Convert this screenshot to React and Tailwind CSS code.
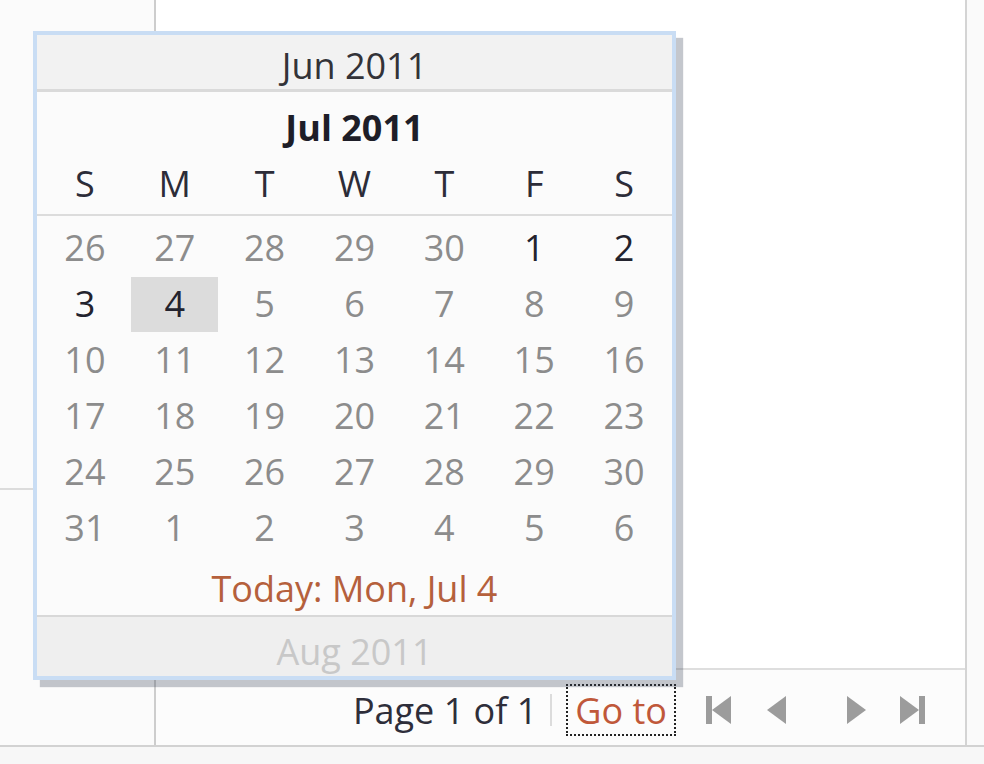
import React from 'react';

const dayNames = ['S', 'M', 'T', 'W', 'T', 'F', 'S'];

// six weeks shown for July 2011; only Jul 1-4 are selectable (max date is today)
const weeks = [
    [26, 27, 28, 29, 30, 1, 2],
    [3, 4, 5, 6, 7, 8, 9],
    [10, 11, 12, 13, 14, 15, 16],
    [17, 18, 19, 20, 21, 22, 23],
    [24, 25, 26, 27, 28, 29, 30],
    [31, 1, 2, 3, 4, 5, 6],
];

const isActive = (w, d) => (w === 0 && d >= 5) || (w === 1 && d <= 1);

const FirstIcon = () => (
    <svg width="26" height="28" viewBox="0 0 26 28">
        <rect x="0" y="0" width="6" height="28" fill="#9c9c9c" />
        <polygon points="25,0 25,28 6,14" fill="#9c9c9c" />
    </svg>
);

const PrevIcon = () => (
    <svg width="20" height="28" viewBox="0 0 20 28">
        <polygon points="19,0 19,28 0,14" fill="#9c9c9c" />
    </svg>
);

const NextIcon = () => (
    <svg width="20" height="28" viewBox="0 0 20 28">
        <polygon points="1,0 1,28 20,14" fill="#9c9c9c" />
    </svg>
);

const LastIcon = () => (
    <svg width="26" height="28" viewBox="0 0 26 28">
        <polygon points="1,0 1,28 20,14" fill="#9c9c9c" />
        <rect x="20" y="0" width="6" height="28" fill="#9c9c9c" />
    </svg>
);

const Calendar = () => (
    <div className="absolute left-[33px] top-[31px] w-[643px] h-[649px] flex flex-col border-4 border-[#c9ddf4] bg-[#fbfbfb] shadow-[7px_7px_1px_rgba(60,70,90,0.3)]">
        <div className="h-[57px] flex items-center justify-center pt-[8px] bg-[#f2f2f2] border-b-[3px] border-[#dadada] text-[#333338]">
            Jun 2011
        </div>
        <div className="h-[68px] flex items-center justify-center pt-[3px] font-bold text-[#1e1e28]">
            Jul 2011
        </div>
        <div className="h-[56px] grid grid-cols-7 px-[3px] pb-[6px] border-b-2 border-[#dcdcdc] text-[#2c2c38]">
            {dayNames.map((n, i) => (
                <div key={i} className="flex items-center justify-center">{n}</div>
            ))}
        </div>
        <div className="grid grid-cols-7 px-[3px] pt-[4px]">
            {weeks.map((week, w) =>
                week.map((d, i) => (
                    <div key={`${w}-${i}`} className="h-[56px] flex items-center justify-center">
                        <div
                            className={
                                'w-[87px] h-[55px] flex items-center justify-center ' +
                                (w === 1 && i === 1 ? 'bg-[#dcdcdc] ' : '') +
                                (isActive(w, i) ? 'text-[#23232e]' : 'text-[#8c8c8c]')
                            }
                        >
                            {d}
                        </div>
                    </div>
                ))
            )}
        </div>
        <div className="h-[61px] flex items-center justify-center pt-[6px] border-b-2 border-[#d8d8d8] text-[#b5603c]">
            Today: Mon, Jul 4
        </div>
        <div className="flex-1 flex items-center justify-center pt-[11px] bg-[#efefef] text-[#c8c8c8]">
            Aug 2011
        </div>
    </div>
);

const App = () => {
    return (
        <div className="relative w-[984px] h-[764px] overflow-hidden bg-white flex flex-col text-[36px] leading-none font-['Open_Sans',sans-serif]">
            <div className="h-[745px] flex">
                {/* left column */}
                <div className="w-[156px] flex flex-col bg-[#fbfbfb] border-r-2 border-[#cdcdcd]">
                    <div className="h-[490px] border-b-2 border-[#dcdcdc]" />
                    <div className="flex-1" />
                </div>

                {/* centre: content and pager */}
                <div className="w-[809px] flex flex-col">
                    <div className="flex-1 bg-white" />
                    <div className="h-[77px] flex items-center justify-end pr-[40px] pt-[4px] bg-[#fcfcfc] border-t-2 border-[#dedede]">
                        <span className="text-[#2e2e3a] pt-[2px]">Page 1 of 1</span>
                        <span className="ml-[13px] w-[2px] h-[32px] bg-[#dcdcdc]" />
                        <span className="ml-[14px] px-[7px] pt-[2px] h-[52px] flex items-center border-2 border-dotted border-[#222] text-[#c0583a]">
                            Go to
                        </span>
                        <div className="ml-[30px] flex items-center">
                            <FirstIcon />
                            <span className="ml-[35px]"><PrevIcon /></span>
                            <span className="ml-[59px]"><NextIcon /></span>
                            <span className="ml-[33px]"><LastIcon /></span>
                        </div>
                    </div>
                </div>

                {/* right column */}
                <div className="flex-1 bg-[#fafafa] border-l-2 border-[#d4d4d4]" />
            </div>
            <div className="flex-1 bg-[#f7f7f7] border-t-2 border-[#d2d2d2]" />

            <Calendar />
        </div>
    );
};

export default App;
